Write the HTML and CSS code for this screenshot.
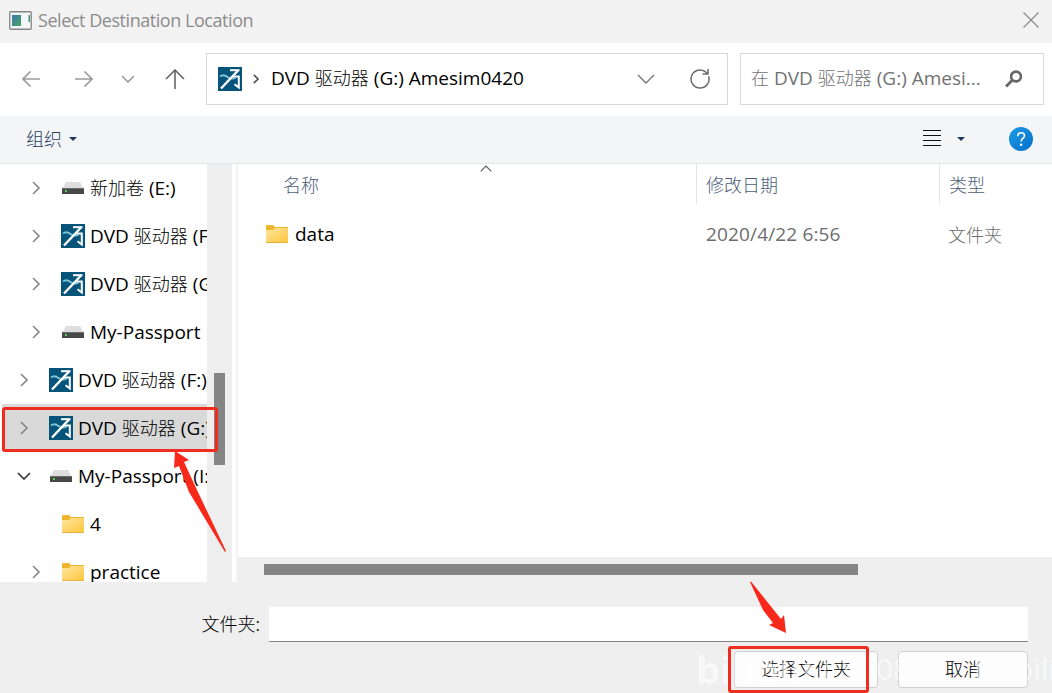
FILE: index.html
```html
<!DOCTYPE html>
<html lang="zh-CN">
<head>
    <meta charset="UTF-8">
    <title>Select Destination Location</title>
    <link rel="stylesheet" href="styles.css">
</head>
<body>
    <svg class="defs" width="0" height="0">
        <defs>
            <linearGradient id="folder-fill" x1="0" y1="0" x2="1" y2="1">
                <stop offset="0" stop-color="#ffe6a0"/>
                <stop offset="1" stop-color="#fbc63c"/>
            </linearGradient>
            <linearGradient id="help-fill" x1="0" y1="0" x2="1" y2="1">
                <stop offset="0" stop-color="#1c9be6"/>
                <stop offset="1" stop-color="#0570ca"/>
            </linearGradient>
            <linearGradient id="app-fill" x1="0" y1="0" x2="1" y2="1">
                <stop offset="0" stop-color="#3c79a8"/>
                <stop offset="1" stop-color="#4aa564"/>
            </linearGradient>
        </defs>
        <symbol id="amesim" viewBox="0 0 24 24">
            <path d="M0 0h24v24H0z" fill="#07547a"/>
            <path d="M2 9.500c3-2.500 5-1.500 7.500.5s5 2 8 1" fill="none" stroke="#7fc3da" stroke-width="1.800"/>
            <path d="M12 3.200h9.500" stroke="#fff" stroke-width="2"/>
            <path d="M20.500 3L3 21.500" stroke="#fff" stroke-width="2.400"/>
            <path d="M15 9.500h5.800v11l-4.300-3.200" fill="none" stroke="#fff" stroke-width="2"/>
        </symbol>
        <symbol id="drive" viewBox="0 0 22 12">
            <path d="M4 0h14l3.500 6H.5z" fill="#dedede"/>
            <path d="M0 6h22v6H0z" fill="#484848"/>
            <path d="M0 6h22v1H0z" fill="#6c6c6c"/>
            <path d="M3 8h2v2H3z" fill="#4fd04a"/>
        </symbol>
        <symbol id="folder" viewBox="0 0 22 18">
            <path d="M0 1q0-1 1-1h6l2 2h13v6H0z" fill="#ecb72f"/>
            <path d="M0 5h7l2-2h13v14.500H0z" fill="url(#folder-fill)"/>
            <path d="M0 17h22v1H0z" fill="#e5b041"/>
        </symbol>
        <symbol id="right" viewBox="0 0 8 14">
            <path d="M1 1l6 6-6 6" fill="none" stroke="#858585" stroke-width="1.600"/>
        </symbol>
    </svg>

    <div class="titlebar">
        <svg class="app-icon" width="23" height="19" viewBox="0 0 23 19">
            <rect x=".75" y=".75" width="21.500" height="17.500" rx="1" fill="#f4f7f7" stroke="#858585" stroke-width="1.300"/>
            <path d="M3 4h9v11H3z" fill="url(#app-fill)"/>
            <path d="M19.500 4h1.500v7h-1.500z" fill="#46937a"/>
        </svg>
        <span class="title">Select Destination Location</span>
        <svg class="close" width="16" height="16" viewBox="0 0 16 16"><path d="M.5.5l15 15M15.500.5l-15 15" stroke="#8c8c8c" stroke-width="1.300"/></svg>
    </div>

    <div class="navbar">
        <div class="nav-buttons">
            <svg width="18" height="16" viewBox="0 0 18 16"><path d="M8.500.5L1 8l7.500 7.500M1 8h17" stroke="#9b9b9b"/></svg>
            <svg width="18" height="16" viewBox="0 0 18 16"><path d="M9.500.5L17 8l-7.500 7.500M17 8H0" stroke="#9b9b9b"/></svg>
            <svg width="14" height="8" viewBox="0 0 14 8"><path d="M1 1l6 6 6-6" stroke="#9b9b9b"/></svg>
            <svg width="20" height="20" viewBox="0 0 20 20"><path d="M1 10l9-9 9 9M10 1v19" stroke="#666"/></svg>
        </div>
        <div class="address">
            <svg width="24" height="24"><use href="#amesim"/></svg>
            <svg class="crumb" width="6" height="10" viewBox="0 0 6 10"><path d="M.8.8L5 5 .8 9.200" fill="none" stroke="#555" stroke-width="1.700"/></svg>
            <span class="path">DVD <b>驱动器</b> (G:) Amesim0420</span>
            <svg class="drop" width="18" height="10" viewBox="0 0 18 10"><path d="M1 1l8 8 8-8" fill="none" stroke="#777" stroke-width="1.400"/></svg>
            <svg width="20" height="20" viewBox="0 0 20 20"><path d="M18.600 7.200A9 9 0 1 1 15 2.500l2.500 2M18 0v5h-5.500" fill="none" stroke="#6b6b6b" stroke-width="1.500"/></svg>
        </div>
        <div class="search">
            <span><b>在</b> DVD <b>驱动器</b> (G:) Amesi...</span>
            <svg width="18" height="18" viewBox="0 0 18 18"><circle cx="11" cy="6.500" r="4.900" fill="none" stroke="#666" stroke-width="2.600"/><path d="M7.500 10L1 16.500" stroke="#666" stroke-width="2.800"/></svg>
        </div>
    </div>

    <div class="toolbar">
        <b>组织</b>
        <i class="caret"></i>
        <svg class="view" width="18" height="17" viewBox="0 0 18 17"><path d="M0 .5h18M0 5.500h18M0 10.500h18M0 15.500h18" stroke="#111"/></svg>
        <i class="caret"></i>
        <svg class="help" width="24" height="24" viewBox="0 0 24 24"><circle cx="12" cy="12" r="12" fill="url(#help-fill)"/><path d="M8.800 9.200c0-4.700 6.700-4.500 6.700-.4 0 2.600-3.400 2.800-3.400 5.700" fill="none" stroke="#fff" stroke-width="1.600"/><circle cx="12.100" cy="17.800" r="1.200" fill="#fff"/></svg>
    </div>

    <div class="main">
        <div class="tree">
            <div class="node deep"><svg class="arrow"><use href="#right"/></svg><svg class="drive"><use href="#drive"/></svg><span><b>新加卷</b> (E:)</span></div>
            <div class="node deep"><svg class="arrow"><use href="#right"/></svg><svg class="disc"><use href="#amesim"/></svg><span>DVD <b>驱动器</b> (F:)</span></div>
            <div class="node deep"><svg class="arrow"><use href="#right"/></svg><svg class="disc"><use href="#amesim"/></svg><span>DVD <b>驱动器</b> (G:)</span></div>
            <div class="node deep"><svg class="arrow"><use href="#right"/></svg><svg class="drive"><use href="#drive"/></svg><span>My-Passport</span></div>
            <div class="node"><svg class="arrow"><use href="#right"/></svg><svg class="disc"><use href="#amesim"/></svg><span>DVD <b>驱动器</b> (F:)</span></div>
            <div class="node selected"><svg class="arrow"><use href="#right"/></svg><svg class="disc"><use href="#amesim"/></svg><span>DVD <b>驱动器</b> (G:)</span></div>
            <div class="node"><svg class="arrow open" viewBox="0 0 14 8"><path d="M1 1l6 6 6-6" fill="none" stroke="#333" stroke-width="1.600"/></svg><svg class="drive"><use href="#drive"/></svg><span>My-Passport (I:)</span></div>
            <div class="node deep"><svg class="arrow"></svg><svg class="folder"><use href="#folder"/></svg><span>4</span></div>
            <div class="node deep"><svg class="arrow"><use href="#right"/></svg><svg class="folder"><use href="#folder"/></svg><span>practice</span></div>
        </div>
        <div class="vscroll"><div class="vthumb"></div></div>
        <div class="splitter"></div>
        <div class="files">
            <div class="columns">
                <svg class="sort" width="12" height="7" viewBox="0 0 12 7"><path d="M.7 6.300L6 1l5.300 5.300" fill="none" stroke="#555" stroke-width="1.100"/></svg>
                <b class="name">名称</b>
                <b class="date">修改日期</b>
                <b class="type">类型</b>
            </div>
            <div class="file">
                <span class="name"><svg class="folder"><use href="#folder"/></svg>data</span>
                <span class="date">2020/4/22 6:56</span>
                <b class="type">文件夹</b>
            </div>
            <div class="hscroll"><div class="hthumb"></div></div>
        </div>
    </div>

    <div class="footer">
        <div class="field">
            <label for="folder-name"><b>文件夹:</b></label>
            <input type="text" id="folder-name">
        </div>
        <div class="buttons">
            <button><b>选择文件夹</b></button>
            <button><b>取消</b></button>
        </div>
    </div>

    <div class="watermark"><span class="logo">bilibili</span><span class="uid">CV0081</span><span class="site">bilibili</span></div>

    <svg class="marks" width="1052" height="693" viewBox="0 0 1052 693">
        <rect x="3.500" y="408.500" width="213" height="42" rx="1.500"/>
        <rect x="729.500" y="647.500" width="138" height="44" rx="1.500"/>
        <path d="M175 451l14 9-5 2 13 28 29 61-1 1-36-60-10-26-5 2z"/>
        <path d="M750 582l1-.5 30 37.500 3-4 2 18-17-8 4-2-10-13z"/>
    </svg>
</body>
</html>
```
FILE: styles.css
```css
* {
    box-sizing: border-box;
}
body {
    margin: 0;
    width: 1052px;
    height: 693px;
    overflow: hidden;
    position: relative;
    background: #efefef;
    font-family: "Open Sans", "Noto Sans CJK SC", sans-serif;
    font-size: 19px;
    line-height: 26px;
    color: #000;
    white-space: nowrap;
}
/* Chinese runs are slightly smaller and lighter than the Latin text */
b {
    font-family: "Noto Sans CJK SC", sans-serif;
    font-size: 18px;
    font-weight: 300;
    line-height: 20px;
}
svg {
    display: block;
    flex: none;
}
.defs {
    position: absolute;
}
.titlebar {
    display: flex;
    align-items: center;
    height: 43px;
    padding: 0 13px 3px 9px;
    background: #f2f2f2;
    color: #8c8c8c;
}
.title {
    margin-left: 6px;
    font-size: 18px;
    letter-spacing: -0.45px;
}
.close {
    margin-left: auto;
}
.navbar {
    display: flex;
    height: 73px;
    padding: 10px 8px 11px 0;
    background: #fff;
}
.nav-buttons {
    display: flex;
    align-items: center;
    width: 206px;
    padding-left: 22px;
}
.nav-buttons svg {
    fill: none;
    stroke-width: 1.6;
}
.nav-buttons svg:nth-child(2) {
    margin-left: 35px;
}
.nav-buttons svg:nth-child(3) {
    margin-left: 28px;
}
.nav-buttons svg:nth-child(4) {
    margin-left: 30px;
}
.address {
    display: flex;
    align-items: center;
    width: 522px;
    padding: 0 17px 0 11px;
    border: 1px solid #d8d8d8;
}
.address span, .search span {
    padding-bottom: 2px;
}
.crumb {
    margin-left: 11px;
}
.path {
    margin-left: 12px;
}
.drop {
    margin: 0 35px 0 auto;
}
.search {
    display: flex;
    align-items: center;
    justify-content: space-between;
    width: 304px;
    margin-left: 12px;
    padding: 0 20px 0 10px;
    border: 1px solid #d8d8d8;
    color: #717171;
}
.toolbar {
    display: flex;
    align-items: center;
    height: 48px;
    padding: 0 19px 2px 26px;
    background: #f3f5f7;
    border-bottom: 1px solid #e5e7e9;
    color: #2b3d5c;
}
.toolbar b {
    padding-bottom: 2px;
}
.caret {
    border: 4px solid transparent;
    border-top-color: #1e395b;
    border-bottom: 0;
    margin-left: 7px;
}
.view {
    margin-left: auto;
}
.view + .caret {
    margin-left: 16px;
}
.help {
    margin-left: 44px;
}
.main {
    display: flex;
    height: 418px;
    background: #fff;
}
.tree {
    width: 207px;
    overflow: hidden;
}
.node {
    display: flex;
    align-items: center;
    height: 48px;
    padding-left: 17px;
}
.deep {
    padding-left: 29px;
}
.selected {
    margin-left: 2px;
    padding-left: 15px;
    background: #d9d9d9;
}
.arrow {
    width: 14px;
    height: 14px;
    margin-right: 18px;
}
.open {
    height: 8px;
}
.disc {
    width: 24px;
    height: 24px;
}
.drive {
    width: 22px;
    height: 12px;
    margin: 0 1px;
}
.folder {
    width: 22px;
    height: 18px;
}
.node .folder {
    margin: 0 1px;
}
.node span {
    margin-left: 5px;
    padding-bottom: 1px;
}
.vscroll {
    width: 25px;
    padding: 209px 7px 0;
    background: #eee;
}
.vthumb {
    height: 92px;
    background: #858585;
}
.splitter {
    width: 6px;
    border-right: 2px solid #f3f3f3;
}
.files {
    display: flex;
    flex-direction: column;
    flex: 1;
    position: relative;
}
.columns, .file {
    display: flex;
    align-items: center;
}
.columns {
    height: 40px;
    color: #4c607a;
}
.sort {
    position: absolute;
    left: 242px;
    top: 1px;
}
.name {
    width: 458px;
}
.columns .name {
    padding-left: 45px;
}
.date {
    width: 243px;
}
.columns .date, .columns .type {
    height: 40px;
    line-height: 40px;
    border-left: 1px solid #e3e3e3;
}
.date, .type {
    padding-left: 9px;
}
.file {
    height: 59px;
    color: #6d6d6d;
}
.file .name {
    display: flex;
    align-items: center;
    gap: 7px;
    padding-left: 28px;
    color: #000;
}
.file .date {
    padding-left: 10px;
    letter-spacing: 0.15px;
}
.hscroll {
    height: 25px;
    margin-top: auto;
    padding: 7px 194px 7px 26px;
    background: #efefef;
}
.hthumb {
    height: 11px;
    background: #858585;
}
.footer {
    padding: 25px 24px 0 0;
}
.field {
    display: flex;
    align-items: center;
    justify-content: flex-end;
    gap: 9px;
}
.field label {
    padding-bottom: 2px;
}
.field input {
    width: 759px;
    height: 35px;
    border: 0;
    border-bottom: 1px solid #858585;
    background: #fff;
}
.buttons {
    display: flex;
    justify-content: flex-end;
    gap: 20px;
    margin-top: 9px;
}
button {
    height: 37px;
    width: 130px;
    padding: 0 0 2px;
    border: 1px solid #d0d0d0;
    border-radius: 4px;
    background: #fdfdfd;
    color: #000;
    font: inherit;
}
button:first-child {
    width: 144px;
}
.watermark {
    position: absolute;
    left: 696px;
    top: 647px;
    width: 356px;
    height: 46px;
    overflow: hidden;
    color: rgba(255, 255, 255, 0.6);
    font-size: 30px;
    line-height: 44px;
}
.logo {
    font-weight: bold;
    font-size: 38px;
}
.uid {
    position: absolute;
    left: 126px;
}
.site {
    position: absolute;
    left: 278px;
}
.marks {
    position: absolute;
    left: 0;
    top: 0;
    fill: #f8291b;
}
.marks rect {
    fill: none;
    stroke: #ee2c20;
    stroke-width: 3;
}
```
